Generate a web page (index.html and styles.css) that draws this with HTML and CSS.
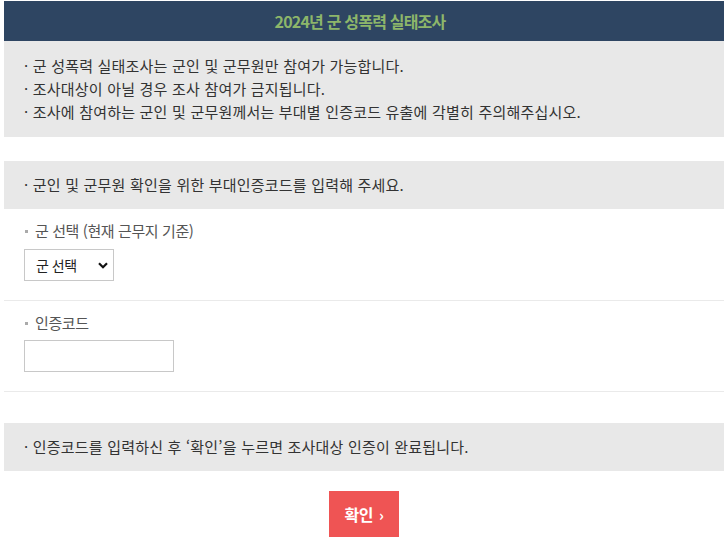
FILE: index.html
```html
<!DOCTYPE html>
<html lang="ko">
<head>
<meta charset="utf-8">
<title>2024년 군 성폭력 실태조사</title>
<link rel="stylesheet" href="styles.css">
</head>
<body>
<div class="wrap">
  <header class="title-bar">
    <h1 class="title">2024년 군 성폭력 실태조사</h1>
  </header>
  <div class="notice notice-top">
    <p>· 군 성폭력 실태조사는 군인 및 군무원만 참여가 가능합니다.</p>
    <p>· 조사대상이 아닐 경우 조사 참여가 금지됩니다.</p>
    <p>· 조사에 참여하는 군인 및 군무원께서는 부대별 인증코드 유출에 각별히 주의해주십시오.</p>
  </div>
  <div class="notice notice-mid">
    <p>· 군인 및 군무원 확인을 위한 부대인증코드를 입력해 주세요.</p>
  </div>
  <div class="field">
    <div class="label"><span class="dot"></span>군 선택 (현재 근무지 기준)</div>
    <div class="select-box">
      <span>군 선택</span>
      <svg class="chev" width="10" height="7" viewBox="0 0 10 7"><path d="M1 1.2 L5 5.2 L9 1.2" fill="none" stroke="#111" stroke-width="2.2"/></svg>
    </div>
  </div>
  <div class="field">
    <div class="label"><span class="dot"></span>인증코드</div>
    <div class="text-box"></div>
  </div>
  <div class="notice notice-bottom">
    <p>· 인증코드를 입력하신 후 ‘확인’을 누르면 조사대상 인증이 완료됩니다.</p>
  </div>
  <div class="actions">
    <button class="btn" type="button">확인<span class="arrow">›</span></button>
  </div>
</div>
</body>
</html>
```

FILE: styles.css
```css
* { box-sizing: border-box; }
html, body { margin: 0; padding: 0; background: #fff; }
body {
  font-family: "Noto Sans CJK KR", "Noto Sans", sans-serif;
  color: #333;
}
.wrap {
  margin: 1px 4px 0;
  width: 720px;
}
.title-bar {
  background: #2e4562;
  height: 40px;
  display: flex;
  align-items: center;
  justify-content: center;
}
.title {
  margin: 0 8px 0 0;
  font-size: 16px;
  font-weight: 700;
  color: #8db66a;
  letter-spacing: -0.8px;
}
.notice {
  background: #e8e8e8;
  padding: 13px 20px 14px;
}
.notice p {
  margin: 0;
  font-size: 15px;
  line-height: 23px;
  letter-spacing: 0.2px;
  color: #333;
}
.notice-top { height: 96px; }
.notice-mid { margin-top: 24px; height: 48px; padding-top: 12px; }
.notice-bottom { margin-top: 31px; height: 48px; padding-top: 12px; }
.field {
  height: 92px;
  padding: 10px 20px 0;
  border-bottom: 1px solid #eaeaea;
  display: flex;
  flex-direction: column;
  gap: 8px;
}
.field + .field { height: 91px; gap: 7px; }
.label {
  display: flex;
  align-items: center;
  height: 22px;
  font-size: 15px;
  color: #555;
  letter-spacing: -0.4px;
}
.dot {
  width: 3px;
  height: 3px;
  background: #aaa;
  margin: 3px 7px 0 1px;
}
.select-box {
  width: 90px;
  height: 32px;
  border: 1px solid #c8c8c8;
  display: flex;
  align-items: center;
  justify-content: space-between;
  padding: 0 5px 0 11px;
  font-size: 14px;
  color: #222;
  letter-spacing: -0.5px;
}
.text-box {
  width: 150px;
  height: 32px;
  border: 1px solid #c8c8c8;
}
.actions {
  display: flex;
  justify-content: center;
  padding-top: 20px;
}
.btn {
  width: 70px;
  height: 46px;
  background: #ef5454;
  border: 0;
  color: #fff;
  font-family: inherit;
  font-size: 16px;
  font-weight: 700;
  letter-spacing: -0.5px;
  padding: 0;
  display: flex;
  align-items: center;
  justify-content: center;
}
.arrow { font-size: 15px; margin-left: 6px; }
```
